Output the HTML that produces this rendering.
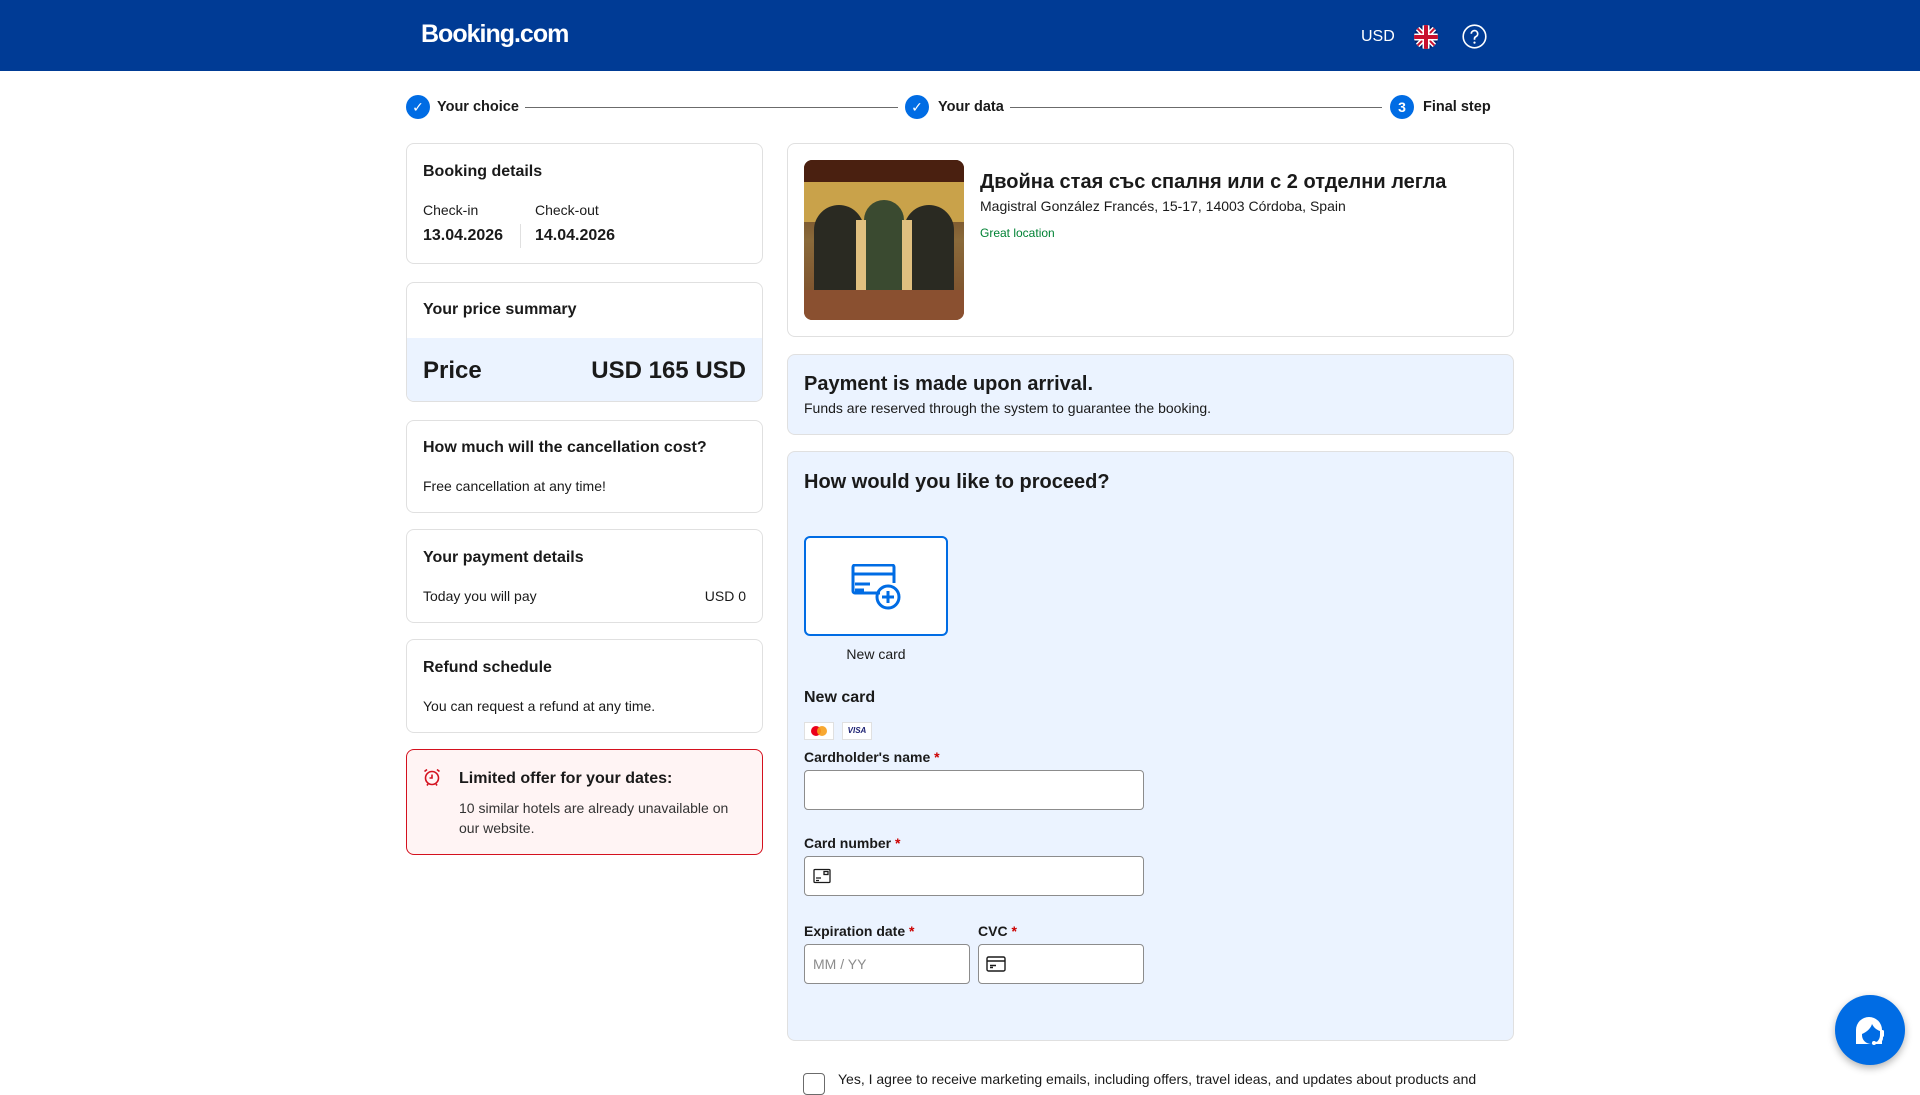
<!DOCTYPE html>
<html><head><meta charset="utf-8"><style>
*{box-sizing:border-box;margin:0;padding:0}
body{width:1920px;height:1080px;overflow:hidden;background:#fff;font-family:"Liberation Sans","DejaVu Sans",sans-serif;color:#1a1a1a;font-size:14px;position:relative}
.a{position:absolute}
.hdr{left:0;top:0;width:1920px;height:71px;background:#003b95}
.card{position:absolute;border:1px solid #e0e0e0;border-radius:8px;background:#fff}
.t16{font-size:16px;font-weight:bold}
.lbl{font-size:14px;font-weight:bold;color:#1a1a1a}
.lbl b{color:#c00}
.inp{position:absolute;background:#fff;border:1px solid #8c8c8c;border-radius:4px;height:40px}
.step{width:24px;height:24px;border-radius:50%;background:#006ce4;color:#fff;font-weight:bold;font-size:14px;text-align:center;line-height:24px}
</style></head><body>
<div class="a hdr"></div>
<div class="a" style="left:421px;top:20px;color:#fff;font-size:25px;font-weight:bold;letter-spacing:-1px">Booking.com</div>
<div class="a" style="left:1361px;top:28px;color:#fff;font-size:16px">USD</div>
<svg class="a" style="left:1414px;top:25px" width="24" height="24" viewBox="0 0 24 24"><defs><clipPath id="c"><circle cx="12" cy="12" r="12"/></clipPath></defs><g clip-path="url(#c)"><rect width="24" height="24" fill="#012169"/><path d="M0 0L24 24M24 0L0 24" stroke="#fff" stroke-width="5"/><path d="M0 0L24 24M24 0L0 24" stroke="#c8102e" stroke-width="2"/><path d="M12 0V24M0 12H24" stroke="#fff" stroke-width="7"/><path d="M12 0V24M0 12H24" stroke="#c8102e" stroke-width="4"/></g></svg>
<svg class="a" style="left:1462px;top:24px" width="25" height="25" viewBox="0 0 25 25"><circle cx="12.5" cy="12.5" r="11.3" fill="none" stroke="#fff" stroke-width="1.6"/><path d="M9.3 9.8a3.2 3.2 0 1 1 4.5 2.9c-.9.4-1.3 1-1.3 2v1" fill="none" stroke="#fff" stroke-width="1.7"/><circle cx="12.5" cy="18.6" r="1.1" fill="#fff"/></svg>

<div class="a step" style="left:406px;top:95px">✓</div>
<div class="a t16" style="left:437px;top:99px;font-size:14.5px">Your choice</div>
<div class="a" style="left:525px;top:107px;width:373px;height:1px;background:#6b6b6b"></div>
<div class="a step" style="left:905px;top:95px">✓</div>
<div class="a t16" style="left:938px;top:99px;font-size:14.5px">Your data</div>
<div class="a" style="left:1010px;top:107px;width:372px;height:1px;background:#6b6b6b"></div>
<div class="a step" style="left:1390px;top:95px">3</div>
<div class="a t16" style="left:1423px;top:99px;font-size:14.5px">Final step</div>

<!-- left column -->
<div class="card" style="left:406px;top:143px;width:357px;height:121px"></div>
<div class="a t16" style="left:423px;top:163px">Booking details</div>
<div class="a" style="left:423px;top:202px">Check-in</div>
<div class="a" style="left:535px;top:202px">Check-out</div>
<div class="a" style="left:423px;top:227px;font-size:16px;font-weight:bold">13.04.2026</div>
<div class="a" style="left:535px;top:227px;font-size:16px;font-weight:bold">14.04.2026</div>
<div class="a" style="left:520px;top:224px;width:1px;height:24px;background:#e0e0e0"></div>

<div class="card" style="left:406px;top:282px;width:357px;height:120px;overflow:hidden"><div style="position:absolute;left:0;top:55px;width:100%;height:65px;background:#ebf3ff"></div></div>
<div class="a t16" style="left:423px;top:301px">Your price summary</div>
<div class="a" style="left:423px;top:357px;font-size:24px;font-weight:bold">Price</div>
<div class="a" style="left:500px;top:357px;width:246px;text-align:right;font-size:24px;font-weight:bold">USD 165 USD</div>

<div class="card" style="left:406px;top:420px;width:357px;height:93px"></div>
<div class="a t16" style="left:423px;top:439px">How much will the cancellation cost?</div>
<div class="a" style="left:423px;top:478px">Free cancellation at any time!</div>

<div class="card" style="left:406px;top:529px;width:357px;height:94px"></div>
<div class="a t16" style="left:423px;top:549px">Your payment details</div>
<div class="a" style="left:423px;top:588px">Today you will pay</div>
<div class="a" style="left:600px;top:588px;width:146px;text-align:right">USD 0</div>

<div class="card" style="left:406px;top:639px;width:357px;height:94px"></div>
<div class="a t16" style="left:423px;top:659px">Refund schedule</div>
<div class="a" style="left:423px;top:698px">You can request a refund at any time.</div>

<div class="card" style="left:406px;top:749px;width:357px;height:106px;background:#fff4f4;border-color:#d4111e"></div>
<svg class="a" style="left:422px;top:767px" width="20" height="20" viewBox="0 0 20 20" fill="none" stroke="#d4111e" stroke-width="1.6"><circle cx="10" cy="11" r="6.5"/><path d="M10 7.5V11H7.5M2.5 4.5L5 2.5M17.5 4.5L15 2.5M6 17L5 18.5M14 17L15 18.5"/></svg>
<div class="a t16" style="left:459px;top:770px">Limited offer for your dates:</div>
<div class="a" style="left:459px;top:798px;line-height:20px;width:290px;color:#333">10 similar hotels are already unavailable on our website.</div>

<!-- right column -->
<div class="card" style="left:787px;top:143px;width:727px;height:194px"></div>
<svg class="a" style="left:804px;top:160px;border-radius:8px" width="160" height="160" viewBox="0 0 160 160"><defs><linearGradient id="g" x1="0" y1="0" x2="0" y2="1"><stop offset="0" stop-color="#5a2d17"/><stop offset=".5" stop-color="#8a6a3a"/><stop offset="1" stop-color="#7a4a2a"/></linearGradient></defs><rect width="160" height="160" rx="8" fill="url(#g)"/><rect y="0" width="160" height="22" fill="#4a2010"/><rect x="0" y="22" width="160" height="40" fill="#c9a24a"/><path d="M10 160V70a25 25 0 0 1 50 0V160zM100 160V70a25 25 0 0 1 50 0V160z" fill="#2a2a22"/><path d="M60 160V60a20 20 0 0 1 40 0V160z" fill="#3a4a30"/><rect x="52" y="60" width="10" height="100" fill="#e0c080"/><rect x="98" y="60" width="10" height="100" fill="#e0c080"/><rect y="130" width="160" height="30" fill="#8a5030"/></svg>
<div class="a" style="left:980px;top:171px;font-size:20px;font-weight:bold">Двойна стая със спалня или с 2 отделни легла</div>
<div class="a" style="left:980px;top:198px">Magistral González Francés, 15-17, 14003 Córdoba, Spain</div>
<div class="a" style="left:980px;top:226px;font-size:12px;color:#008234">Great location</div>

<div class="card" style="left:787px;top:354px;width:727px;height:81px;background:#ebf3ff"></div>
<div class="a" style="left:804px;top:373px;font-size:20px;font-weight:bold">Payment is made upon arrival.</div>
<div class="a" style="left:804px;top:400px">Funds are reserved through the system to guarantee the booking.</div>

<div class="card" style="left:787px;top:451px;width:727px;height:590px;background:#ebf3ff"></div>
<div class="a" style="left:804px;top:471px;font-size:20px;font-weight:bold">How would you like to proceed?</div>
<div class="a" style="left:804px;top:536px;width:144px;height:100px;background:#fff;border:2px solid #006ce4;border-radius:6px"></div>
<svg class="a" style="left:850px;top:564px" width="52" height="50" viewBox="0 0 52 50" fill="none" stroke="#006ce4" stroke-width="3"><path d="M30 29H5a2 2 0 0 1-2-2V3a2 2 0 0 1 2-2h37a2 2 0 0 1 2 2v16"/><path d="M3 10H44M5 20H20M5 26H14"/><circle cx="38" cy="33" r="11"/><path d="M38 27V39M32 33H44"/></svg>
<div class="a" style="left:804px;top:646px;width:144px;text-align:center">New card</div>
<div class="a t16" style="left:804px;top:689px">New card</div>
<div class="a" style="left:804px;top:722px;width:30px;height:18px;background:#fff;border:1px solid #e0e0e0"><div style="position:absolute;left:6px;top:3px;width:10px;height:10px;border-radius:50%;background:#eb001b"></div><div style="position:absolute;left:12px;top:3px;width:10px;height:10px;border-radius:50%;background:#f79e1b;opacity:.9"></div></div>
<div class="a" style="left:842px;top:722px;width:30px;height:18px;background:#fff;border:1px solid #e0e0e0;font-size:8px;font-weight:bold;font-style:italic;color:#1a1f71;text-align:center;line-height:16px">VISA</div>
<div class="a lbl" style="left:804px;top:749px">Cardholder's name <b>*</b></div>
<div class="inp" style="left:804px;top:770px;width:340px"></div>
<div class="a lbl" style="left:804px;top:835px">Card number <b>*</b></div>
<div class="inp" style="left:804px;top:856px;width:340px"></div>
<svg class="a" style="left:813px;top:868px" width="18" height="16" viewBox="0 0 18 16" fill="none" stroke="#1a1a1a" stroke-width="1.3"><rect x="1" y="1.5" width="16" height="13" rx="1"/><path d="M3 10h5M3 12.5h3"/><rect x="11" y="3.5" width="4" height="3"/></svg>
<div class="a lbl" style="left:804px;top:923px">Expiration date <b>*</b></div>
<div class="a lbl" style="left:978px;top:923px">CVC <b>*</b></div>
<div class="inp" style="left:804px;top:944px;width:166px"></div>
<div class="a" style="left:813px;top:956px;color:#8c8c8c">MM / YY</div>
<div class="inp" style="left:978px;top:944px;width:166px"></div>
<svg class="a" style="left:986px;top:956px" width="20" height="16" viewBox="0 0 20 16" fill="none" stroke="#1a1a1a" stroke-width="1.4"><rect x="1" y="1" width="18" height="14" rx="1.5"/><path d="M1 5H19M4 9.5h6M4 11.5h3"/></svg>

<div class="a" style="left:803px;top:1073px;width:22px;height:22px;border:1px solid #6b6b6b;border-radius:4px;background:#fff"></div>
<div class="a" style="left:838px;top:1071px;color:#1a1a1a">Yes, I agree to receive marketing emails, including offers, travel ideas, and updates about products and</div>

<div class="a" style="left:1835px;top:995px;width:70px;height:70px;border-radius:50%;background:#006ce4;box-shadow:0 3px 8px rgba(0,0,0,.3)"></div>
<svg class="a" style="left:1850px;top:1010px" width="40" height="40" viewBox="0 0 40 40"><path d="M6 34V20a13 13 0 0 1 26 0v14z" fill="#fff"/><path d="M12 24c5-2 9-6 10-10 2 4 5 6 8 7v4a9 9 0 0 1-18 0z" fill="#006ce4"/><path d="M32 22v6c0 3-3 5-7 5" fill="none" stroke="#fff" stroke-width="2"/><circle cx="24" cy="33" r="2" fill="#fff"/><rect x="30" y="20" width="4" height="7" rx="1.5" fill="#fff"/></svg>
</body></html>
